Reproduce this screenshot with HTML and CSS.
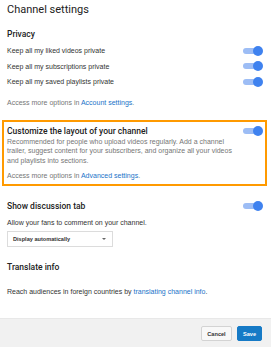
FILE: index.html
```html
<!DOCTYPE html>
<html>
<head>
<meta charset="utf-8">
<link rel="stylesheet" href="styles.css">
</head>
<body>
<div class="page">
  <div class="content">
    <h1 class="title">Channel settings</h1>
    <h2 class="section-head">Privacy</h2>
    <div class="rows">
      <div class="row"><span>Keep all my liked videos private</span><span class="toggle"><span class="track"></span><span class="thumb"></span></span></div>
      <div class="row"><span>Keep all my subscriptions private</span><span class="toggle"><span class="track"></span><span class="thumb"></span></span></div>
      <div class="row"><span>Keep all my saved playlists private</span><span class="toggle"><span class="track"></span><span class="thumb"></span></span></div>
    </div>
    <p class="access">Access more options in <a class="link">Account settings</a>.</p>

    <div class="highlight">
      <div class="head-row"><span class="section-head">Customize the layout of your channel</span><span class="toggle"><span class="track"></span><span class="thumb"></span></span></div>
      <p class="desc">Recommended for people who upload videos regularly. Add a channel trailer, suggest content for your subscribers, and organize all your videos and playlists into sections.</p>
      <p class="access access-box">Access more options in <a class="link">Advanced settings</a>.</p>
    </div>

    <div class="head-row discussion"><span class="section-head">Show discussion tab</span><span class="toggle"><span class="track"></span><span class="thumb"></span></span></div>
    <p class="plain allow">Allow your fans to comment on your channel.</p>
    <div class="select"><span>Display automatically</span><span class="caret"></span></div>

    <h2 class="section-head translate">Translate info</h2>
    <p class="plain reach">Reach audiences in foreign countries by <a class="link">translating channel info</a>.</p>
  </div>
  <div class="footer">
    <button class="btn cancel">Cancel</button>
    <button class="btn save">Save</button>
  </div>
</div>
</body>
</html>
```

FILE: styles.css
```css
* { box-sizing: border-box; }
html, body { margin: 0; padding: 0; background: #fff; }
body { font-family: "Liberation Sans", Arial, sans-serif; color: #333; }
.page { width: 271px; height: 347px; display: flex; flex-direction: column; overflow: hidden; }
.content { padding: 0 8px 0 7px; flex: 1; }
.title { margin: 3px 0 0; font-family: Roboto, "Liberation Sans", sans-serif; font-size: 11px; line-height: 14px; font-weight: 400; color: #222; }
.section-head { margin: 0; font-family: Roboto, "Liberation Sans", sans-serif; font-size: 8.5px; line-height: 12px; font-weight: 500; color: #222; }
h2.section-head { margin-top: 11px; }
.rows { margin-top: 3px; }
.row { display: flex; justify-content: space-between; align-items: center; height: 15.5px; font-size: 7px; color: #333; }
.toggle { position: relative; width: 20px; height: 10px; flex: none; }
.track { position: absolute; left: 0; top: 2px; width: 15px; height: 6px; border-radius: 3px; background: #9dbdf5; }
.thumb { position: absolute; right: 0; top: 0; width: 10px; height: 10px; border-radius: 50%; background: #3f82ef; }
.access { margin: 8px 0 0; font-size: 7px; line-height: 10px; color: #767676; }
.link { color: #1a73c9; text-decoration: none; }
.highlight { margin: 12px -4px 0 -5px; border: 2px solid #ff9a00; padding: 3px 2px 3px 3px; }
.head-row { display: flex; justify-content: space-between; align-items: center; }
.desc { margin: 0; width: 232px; font-size: 7px; line-height: 9.5px; color: #767676; }
.access-box { margin-top: 6px; }
.discussion { margin-top: 14px; }
.plain { margin: 0; font-size: 7px; line-height: 10px; color: #333; }
.allow { margin-top: 6px; }
.select { margin-top: 3px; width: 106px; height: 16px; border: 1px solid #dcdcdc; display: flex; align-items: center; justify-content: space-between; padding: 0 6px 0 5px; font-size: 5.6px; font-weight: 700; color: #333; background: #fff; }
.caret { width: 0; height: 0; border-left: 2.5px solid transparent; border-right: 2.5px solid transparent; border-top: 2.5px solid #666; }
h2.translate { margin-top: 14px; }
.reach { margin-top: 14px; }
.footer { height: 29px; flex: none; background: #f1f1f1; border-top: 1px solid #e8e8e8; display: flex; justify-content: flex-end; align-items: flex-start; gap: 5px; padding: 7px 9px 0 0; }
.btn { height: 15px; font-family: inherit; font-size: 5.6px; font-weight: 700; border-radius: 2px; padding: 0; cursor: pointer; }
.cancel { width: 31px; background: #f8f8f8; border: 1px solid #d3d3d3; color: #333; }
.save { width: 25px; background: #167ac6; border: 1px solid #167ac6; color: #fff; }
```
